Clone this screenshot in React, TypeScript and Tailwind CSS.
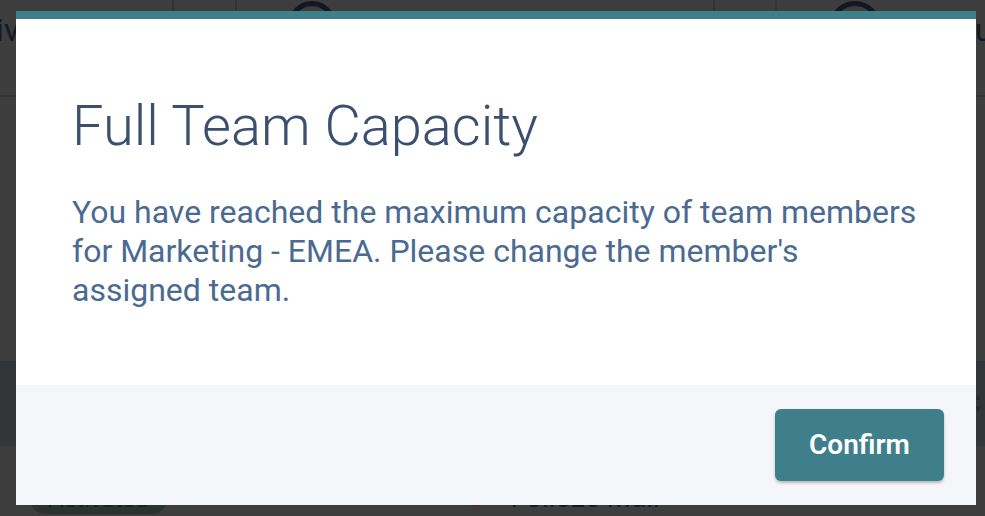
import React from 'react'

const font = { fontFamily: 'Roboto, "Noto Sans", sans-serif' }

function Backdrop() {
  return (
    <div className="flex flex-col h-[516px] w-[985px] overflow-hidden bg-[#3d3d3d] text-[#141a22]" style={font}>
      <div className="flex h-[100px] border-b-2 border-[#333333]">
        <div className="w-[174px] border-r-2 border-[#333333] overflow-hidden">
          <div className="ml-[-52px] mt-[14px] text-[32px] leading-none">Activ</div>
        </div>
        <div className="w-[63px] border-r-2 border-[#333333]" />
        <div className="w-[478px] border-r-2 border-[#333333] pl-[51px] pt-[1px]">
          <div className="w-[48px] h-[48px] rounded-full border-[5px] border-[#111820]" />
        </div>
        <div className="w-[62px] border-r-2 border-[#333333]" />
        <div className="flex-1 flex pl-[52px] pt-[1px] overflow-hidden">
          <div className="w-[52px] h-[52px] shrink-0 rounded-full border-[5px] border-[#111820]" />
          <div className="ml-[94px] mt-[13px] text-[32px] leading-none">u</div>
        </div>
      </div>
      <div className="h-[273px]" />
      <div className="h-[88px] bg-[#343538] flex justify-end items-center pr-[2px]">
        <div className="flex flex-col gap-[2px] text-[#2a2a2a] text-[10px] leading-none">
          <span>▲</span>
          <span>▼</span>
        </div>
      </div>
      <div className="flex items-start pt-[38px]">
        <div className="ml-[30px] px-[18px] h-[30px] rounded-full bg-[#2a332e] text-[24px] leading-[30px] text-[#17211c]">Activated</div>
        <div className="ml-[308px] mt-[2px] w-[8px] h-[20px] bg-[#5a1d1d] skew-x-[-20deg]" />
        <div className="ml-[28px] -mt-[4px] text-[28px] leading-[36px]">Folloze Mail</div>
      </div>
    </div>
  )
}

export default function App() {
  return (
    <div className="relative w-[985px] h-[516px] overflow-hidden">
      <Backdrop />
      <div className="absolute left-[16px] top-[11px] w-[960px] h-[494px] flex flex-col bg-white border-t-[8px] border-[#3e7f8b]" style={font}>
        <div className="flex-1 pl-[56px] pr-[40px] pt-[79px]">
          <h1 className="text-[56px] font-light leading-[56px] text-[#3a506e]">Full Team Capacity</h1>
          <p className="mt-[39px] text-[32px] leading-[39px] text-[#4a6a92] w-[862px]">
            You have reached the maximum capacity of team members for Marketing - EMEA. Please change the member's assigned team.
          </p>
        </div>
        <div className="h-[120px] bg-[#f4f6fa] flex items-center justify-end pr-[32px]">
          <button className="w-[169px] h-[72px] rounded-[6px] bg-[#3e7f8b] text-white text-[28px] font-semibold shadow-[0_2px_3px_rgba(0,0,0,0.25)]">
            Confirm
          </button>
        </div>
      </div>
    </div>
  )
}
